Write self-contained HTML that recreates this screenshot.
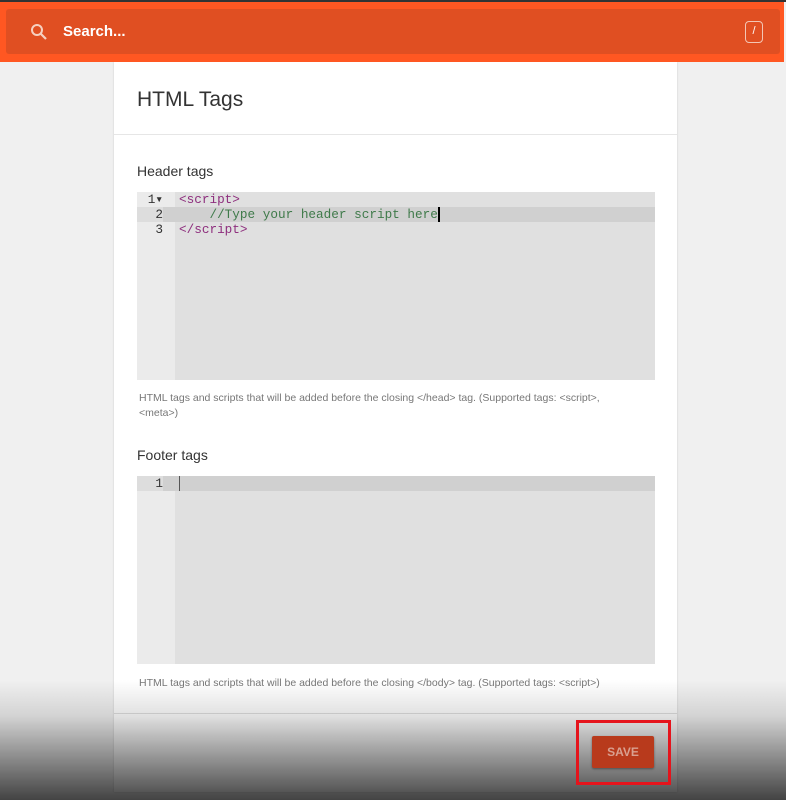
<!DOCTYPE html>
<html><head><meta charset="utf-8"><style>
*{box-sizing:border-box;margin:0;padding:0}
body{width:786px;height:800px;background:#f0f0f0;font-family:"Liberation Sans",sans-serif;position:relative;overflow:hidden}
.top{position:absolute;left:0;top:0;width:786px;height:2px;background:#333}
.bar{position:absolute;left:0;top:2px;width:784px;height:60px;background:#ff5722}
.inner{position:absolute;left:6px;top:7px;width:774px;height:45px;background:#e04f22;border-radius:3px}
.search{position:absolute;left:63px;top:23px;color:#fff;font-size:15px;font-weight:bold}
.kbd{position:absolute;left:745px;top:21px;width:18px;height:22px;border:1.5px solid #f3c6b5;border-radius:4px;color:#fff;font-size:11px;text-align:center;line-height:19px}
.card{position:absolute;left:114px;top:62px;width:563px;height:730px;background:#fff;box-shadow:0 0 2px rgba(0,0,0,.15)}
h1{position:absolute;left:23px;top:26px;font-weight:normal;font-size:21px;color:#333}
.sep{position:absolute;left:0;top:72px;width:563px;height:1px;background:#e6e6e6}
.lbl{position:absolute;left:23px;font-size:14px;color:#333}
.ed{position:absolute;left:23px;width:518px;background:#e0e0e0;font-family:"Liberation Mono",monospace;font-size:12.7px}
.gut{position:absolute;left:0;top:0;width:38px;height:100%;background:#ebebeb}
.line{position:absolute;left:0;width:518px;height:15px;line-height:15px}
.ln{position:absolute;left:0;width:26px;text-align:right;color:#333}
.code{position:absolute;left:42px}
.hint{position:absolute;left:25px;font-size:10.5px;color:#777;line-height:15px;width:495px}
.foot{position:absolute;left:0;top:651px;width:563px;height:1px;background:#e0e0e0}
.shade{position:absolute;left:0;top:680px;width:786px;height:120px;background:linear-gradient(to bottom,rgba(0,0,0,0),rgba(0,0,0,.12) 30%,rgba(0,0,0,.72))}
.save{position:absolute;left:592px;top:736px;width:62px;height:32px;background:#b83a1c;color:#d9a090;font-size:12px;font-weight:bold;text-align:center;line-height:32px;border-radius:2px;box-shadow:0 1px 2px rgba(0,0,0,.4)}
.red{position:absolute;left:576px;top:720px;width:95px;height:65px;border:3px solid #e5141c}
</style></head><body>
<div class="top"></div>
<div class="card">
<h1>HTML Tags</h1><div class="sep"></div>
<div class="lbl" style="top:101px">Header tags</div>
<div class="ed" style="top:130px;height:188px"><div class="gut"></div>
<div class="line" style="top:0"><span class="ln">1▾</span><span class="code" style="color:#8e2f7e">&lt;script&gt;</span></div>
<div class="line" style="top:15px;background:#d0d0d0"><span class="ln" style="background:#ddd">2</span><span class="code" style="color:#3f7a4a">&nbsp;&nbsp;&nbsp;&nbsp;//Type your header script here<span style="border-left:2px solid #000"></span></span></div>
<div class="line" style="top:30px"><span class="ln">3</span><span class="code" style="color:#8e2f7e">&lt;/script&gt;</span></div>
</div>
<div class="hint" style="top:329px">HTML tags and scripts that will be added before the closing &lt;/head&gt; tag. (Supported tags: &lt;script&gt;, &lt;meta&gt;)</div>
<div class="lbl" style="top:385px">Footer tags</div>
<div class="ed" style="top:414px;height:188px"><div class="gut"></div>
<div class="line" style="top:0;background:#d0d0d0"><span class="ln" style="background:#ddd">1</span><span class="code" style="border-left:1px solid #555;height:15px"></span></div>
</div>
<div class="hint" style="top:614px">HTML tags and scripts that will be added before the closing &lt;/body&gt; tag. (Supported tags: &lt;script&gt;)</div>
<div class="foot"></div>
</div>
<div class="shade"></div>
<div class="bar"><div class="inner"></div></div>
<svg style="position:absolute;left:30px;top:23px" width="18" height="18" viewBox="0 0 18 18"><circle cx="7" cy="7" r="5" fill="none" stroke="#f6d0c0" stroke-width="2"/><path d="M11 11l5 5" stroke="#f6d0c0" stroke-width="2.2"/></svg>
<div class="search">Search...</div>
<div class="kbd">/</div>
<div class="save">SAVE</div>
<div class="red"></div>
</body></html>
